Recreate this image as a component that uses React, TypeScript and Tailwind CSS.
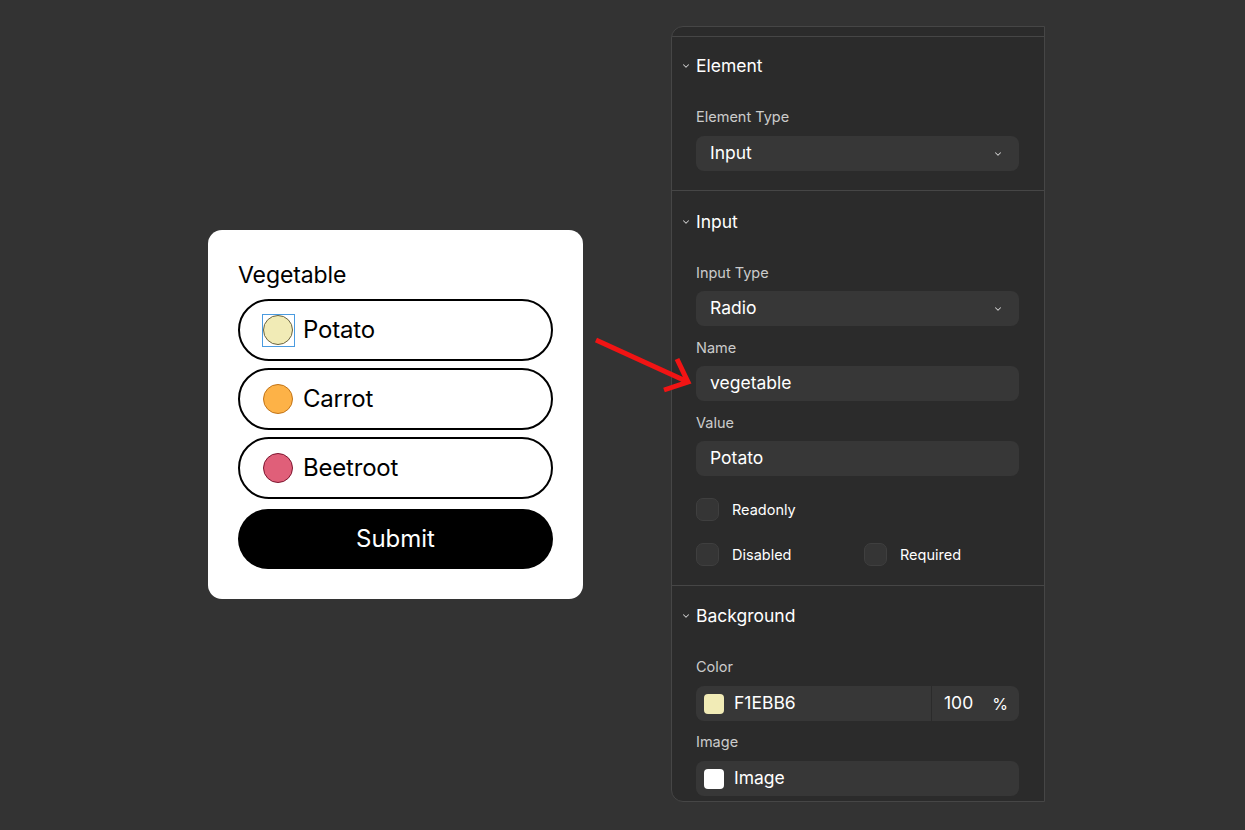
import { ChevronDown } from "lucide-react";

const OPTIONS = [
  { label: "Potato", fill: "bg-[#f1ebb6]", ring: "border-[#6b6440]", selected: true },
  { label: "Carrot", fill: "bg-[#fdb247]", ring: "border-[#c27418]" },
  { label: "Beetroot", fill: "bg-[#e05f79]", ring: "border-[#7d1630]" },
];

function FormCard() {
  return (
    <div className="w-[375px] shrink-0 rounded-[14px] bg-white px-[30px] pb-[30px] pt-[32px] text-black">
      <div className="text-[23px] leading-[26px] tracking-[-0.1px]">Vegetable</div>
      <div className="mt-[11px] flex flex-col gap-[7px]">
        {OPTIONS.map((o) => (
          <div
            key={o.label}
            className="flex h-[62px] items-center gap-[10px] rounded-full border-2 border-black pl-[23px]"
          >
            <span className="relative h-[30px] w-[30px]">
              <span className={`block h-[30px] w-[30px] rounded-full border ${o.fill} ${o.ring}`} />
              {o.selected && (
                <span className="absolute -inset-[1.5px] border-[1.5px] border-[#4a9be0]" />
              )}
            </span>
            <span className="text-[24px] leading-none tracking-[-0.2px]">{o.label}</span>
          </div>
        ))}
      </div>
      <button className="mt-[10px] flex h-[60px] w-full items-center justify-center rounded-full bg-black text-[24px] text-white">
        Submit
      </button>
    </div>
  );
}

function SectionHeader({ title }: { title: string }) {
  return (
    <div className="-ml-[15px] flex h-[20px] items-center gap-[5px]">
      <ChevronDown className="h-[10px] w-[10px] text-[#cfcfcf]" strokeWidth={2.5} />
      <span className="text-[17.5px] leading-[20px] text-white">{title}</span>
    </div>
  );
}

function Label({ children, className = "" }: { children: string; className?: string }) {
  return <div className={`h-[18px] text-[14.5px] leading-[18px] text-[#cbcbcb] ${className}`}>{children}</div>;
}

function Field({ value, select }: { value: string; select?: boolean }) {
  return (
    <div className="flex h-[35px] items-center justify-between rounded-[8px] bg-[#373737] pl-[14px] pr-[16px] text-[17.5px] text-white">
      <span>{value}</span>
      {select && <ChevronDown className="h-[10px] w-[10px] text-[#d0d0d0]" strokeWidth={2.5} />}
    </div>
  );
}

function Check({ label }: { label: string }) {
  return (
    <div className="flex items-center gap-[13px]">
      <span className="h-[23px] w-[23px] rounded-[7px] border border-[#3f3f3f] bg-[#353535]" />
      <span className="text-[14.5px] text-white">{label}</span>
    </div>
  );
}

function Panel() {
  return (
    <div className="h-[776px] w-[374px] shrink-0 overflow-hidden rounded-l-[12px] border border-[#464646] bg-[#2b2b2b]">
      <div className="h-[10px] border-b border-[#464646]" />

      <div className="border-b border-[#464646] pb-[19px] pl-[24px] pr-[25px] pt-[19px]">
        <SectionHeader title="Element" />
        <Label className="mt-[32px]">Element Type</Label>
        <div className="mt-[10px]">
          <Field value="Input" select />
        </div>
      </div>

      <div className="border-b border-[#464646] pb-[19px] pl-[24px] pr-[25px] pt-[21px]">
        <SectionHeader title="Input" />
        <Label className="mt-[32px]">Input Type</Label>
        <div className="mt-[9px]">
          <Field value="Radio" select />
        </div>
        <Label className="mt-[13px]">Name</Label>
        <div className="mt-[9px]">
          <Field value="vegetable" />
        </div>
        <Label className="mt-[13px]">Value</Label>
        <div className="mt-[9px]">
          <Field value="Potato" />
        </div>
        <div className="mt-[22px]">
          <Check label="Readonly" />
        </div>
        <div className="mt-[22px] grid grid-cols-[168px_1fr]">
          <Check label="Disabled" />
          <Check label="Required" />
        </div>
      </div>

      <div className="pl-[24px] pr-[25px] pt-[20px]">
        <SectionHeader title="Background" />
        <Label className="mt-[32px]">Color</Label>
        <div className="mt-[10px] flex h-[35px] items-center rounded-[8px] bg-[#373737] text-[17.5px] text-white">
          <div className="flex h-full flex-1 items-center gap-[10px] border-r border-[#2b2b2b] pl-[8px]">
            <span className="h-[20px] w-[20px] rounded-[4px] bg-[#f1ebb6]" />
            <span>F1EBB6</span>
          </div>
          <div className="flex w-[87px] items-center justify-between pl-[12px] pr-[11px]">
            <span>100</span>
            <span className="text-[16px]">%</span>
          </div>
        </div>
        <Label className="mt-[12px]">Image</Label>
        <div className="mt-[10px] flex h-[35px] items-center gap-[10px] rounded-[8px] bg-[#373737] pl-[8px] text-[17.5px] text-white">
          <span className="h-[20px] w-[20px] rounded-[4px] bg-white" />
          <span>Image</span>
        </div>
      </div>
    </div>
  );
}

export default function App() {
  return (
    <div
      className="relative h-[830px] w-full overflow-hidden bg-[#333333]"
      style={{ fontFamily: "Inter, 'Noto Sans', sans-serif" }}
    >
      <div className="flex items-start pl-[208px]">
        <div className="mt-[230px]">
          <FormCard />
        </div>
        <div className="ml-[88px] mt-[26px]">
          <Panel />
        </div>
      </div>
      <svg className="absolute left-0 top-0" width="1245" height="830" viewBox="0 0 1245 830" fill="none">
        <path
          d="M596 340 L688 382 M677 359 L688 382 L664 390"
          stroke="#f11414"
          strokeWidth="5"
          strokeLinecap="butt"
          strokeLinejoin="miter"
        />
      </svg>
    </div>
  );
}
